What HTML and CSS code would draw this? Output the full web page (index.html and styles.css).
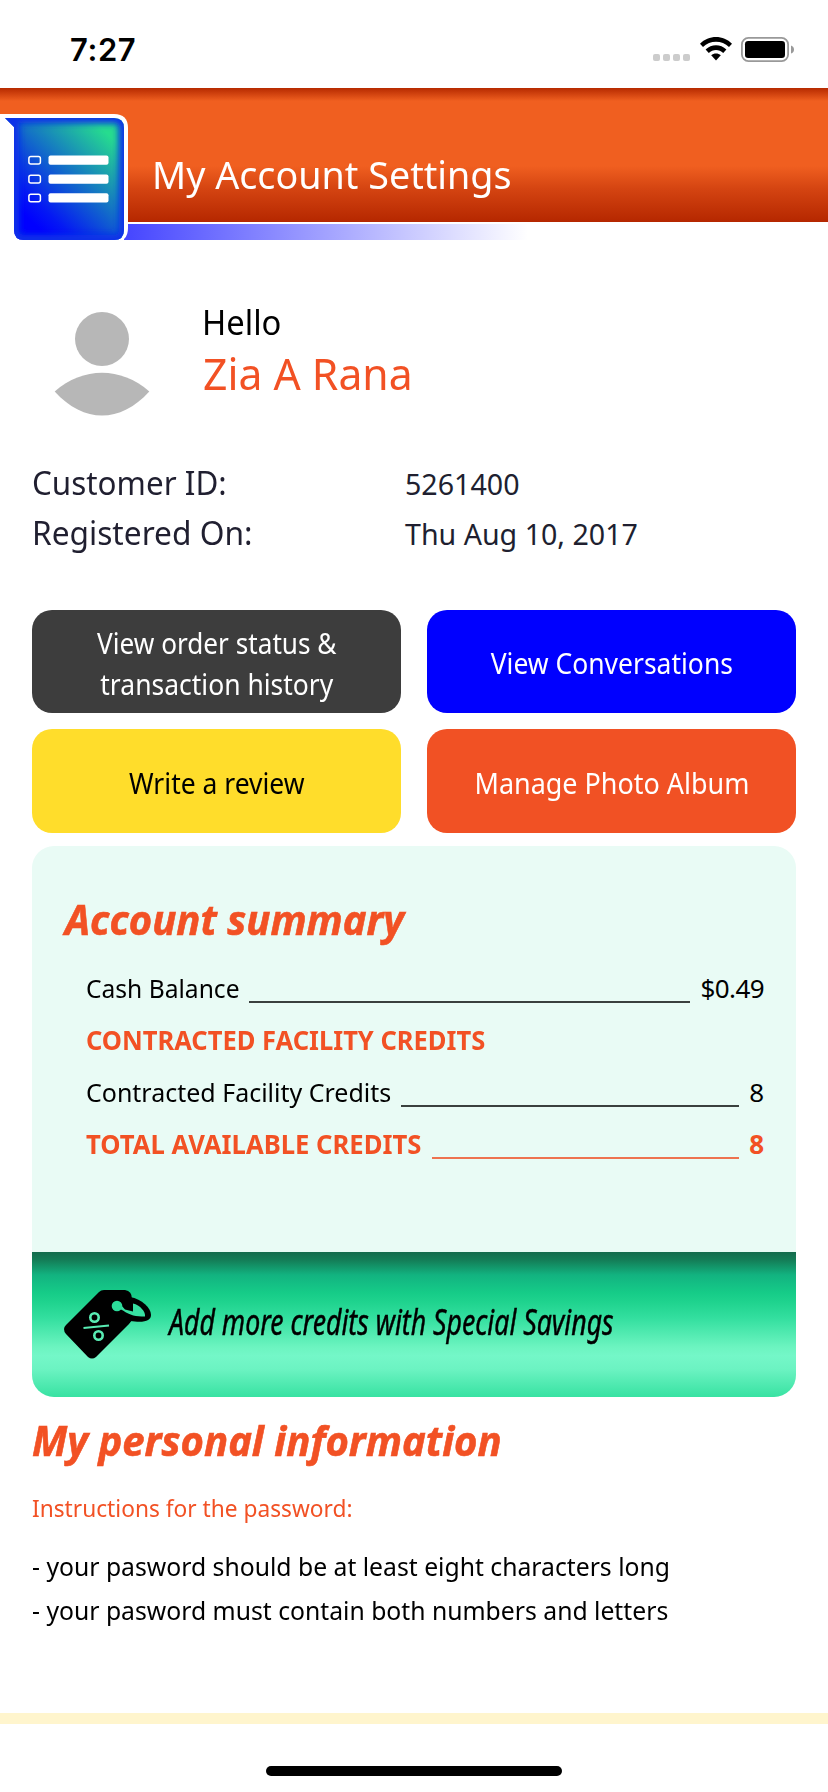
FILE: index.html
```html
<!DOCTYPE html>
<html lang="en">
<head>
<meta charset="utf-8">
<title>My Account Settings</title>
<link rel="stylesheet" href="styles.css">
</head>
<body>
<div class="screen">
  <div class="status">
    <span class="clock">7:27</span>
    <div class="status-icons">
      <span class="dots"><i></i><i></i><i></i><i></i></span>
      <svg class="wifi" viewBox="0 0 32 24" width="32" height="24">
        <path d="M0 6.800C8.500-2.200 23.500-2.200 32 6.800L29 9.900C22 2.900 10 2.900 3 9.900Z"/>
        <path d="M5.600 12.600C11.400 6.800 20.600 6.800 26.400 12.600L23.200 15.900C19.200 12 12.800 12 8.800 15.900Z"/>
        <path d="M11.200 18.300C13.900 15.800 18.100 15.800 20.800 18.300L16 23.400Z"/>
      </svg>
      <svg class="battery" viewBox="0 0 54 26" width="54" height="26">
        <rect x=".9" y=".9" width="46.200" height="23.200" rx="6.500" fill="#fff" stroke="#999" stroke-width="1.800"/>
        <rect x="4" y="4" width="40" height="17" rx="3.200"/>
        <path d="M50 8.500Q53 9.500 53 12.500T50 16.500Z" fill="#999"/>
      </svg>
    </div>
  </div>

  <header class="header">
    <div class="header-bar"><h1 class="fit title">My Account Settings</h1></div>
    <div class="header-stripe"></div>
    <svg class="tab" viewBox="0 0 128 128" width="128" height="128">
      <defs>
        <linearGradient id="tabFill" gradientUnits="userSpaceOnUse" x1="30" y1="106" x2="110" y2="22">
          <stop offset="0" stop-color="#00f"/><stop offset=".15" stop-color="#0418f4"/><stop offset="1" stop-color="#26dc8f"/>
        </linearGradient>
        <clipPath id="tabClip"><path d="M5 4H114Q124 4 124 14V116Q124 126 114 126H24Q14 126 14 116V13Z"/></clipPath>
        <filter id="soft" x="-20%" y="-20%" width="140%" height="140%"><feGaussianBlur stdDeviation="3"/></filter>
      </defs>
      <path d="M0 0H114Q128 0 128 14V114Q128 128 114 128H0Z" fill="#fff"/>
      <g clip-path="url(#tabClip)">
        <rect width="128" height="128" fill="url(#tabFill)"/>
        <path d="M5 4H114Q124 4 124 14V116Q124 126 114 126H24Q14 126 14 116V13Z" fill="none" stroke="#0a30e8" stroke-width="11" filter="url(#soft)"/>
      </g>
      <g fill="none" stroke="#fff" stroke-width="1.500">
        <rect x="28.900" y="42.400" width="11.500" height="7.600" rx="2"/>
        <rect x="28.900" y="61.300" width="11.500" height="7.600" rx="2"/>
        <rect x="28.900" y="80.200" width="11.500" height="7.600" rx="2"/>
      </g>
      <g fill="#fff">
        <rect x="48.500" y="41.500" width="60" height="9.300" rx="2"/>
        <rect x="48.500" y="60.400" width="60" height="9.300" rx="2"/>
        <rect x="48.500" y="79.300" width="60" height="9.300" rx="2"/>
      </g>
    </svg>
  </header>

  <section class="profile">
    <svg class="avatar" viewBox="0 0 96 104" width="96" height="104" fill="#b7b7b7">
      <circle cx="48" cy="27" r="27"/>
      <path d="M.7 79.500C29 54.500 67 54.500 95.300 79.500C66 111.500 30 111.500 .7 79.500Z"/>
    </svg>
    <div>
      <p class="fit hello">Hello</p>
      <p class="fit name">Zia A Rana</p>
    </div>
  </section>

  <dl class="details">
    <dt class="fit k-id">Customer ID:</dt><dd>5261400</dd>
    <dt class="fit k-reg">Registered On:</dt><dd>Thu Aug 10, 2017</dd>
  </dl>

  <nav class="actions">
    <a class="action dark"><span class="fit k-order">View order status &amp;</span><span class="fit k-history">transaction history</span></a>
    <a class="action blue"><span class="fit k-history">View Conversations</span></a>
    <a class="action yellow"><span class="fit k-history">Write a review</span></a>
    <a class="action orange"><span class="fit k-photo">Manage Photo Album</span></a>
  </nav>

  <section class="card">
    <div class="summary">
      <h2 class="fit heading">Account summary</h2>
      <div class="row"><span class="label w-cash"><span class="fit k-cash">Cash Balance</span></span><i class="rule"></i><span class="value w-money">$0.49</span></div>
      <div class="row strong"><span class="label"><span class="fit k-strong">CONTRACTED FACILITY CREDITS</span></span></div>
      <div class="row"><span class="label w-contracted"><span class="fit k-contracted">Contracted Facility Credits</span></span><i class="rule"></i><span class="value">8</span></div>
      <div class="row strong"><span class="label w-total"><span class="fit k-total">TOTAL AVAILABLE CREDITS</span></span><i class="rule"></i><span class="value">8</span></div>
    </div>
    <div class="banner">
      <svg class="tag" viewBox="0 0 88 70" width="88" height="70">
        <path d="M0 39Q0 37 2 35L35 2Q37 0 40 0H61Q68 1 68 9V29Q68 31 65 34L32 67Q28 70 24 67L2 44Q0 42 0 39Z"/>
        <path d="M66 7C78 9 87 18 87 25C87 31 80 33 66 31Z"/>
        <path d="M54 18L59 20.500C66 25.500 72 26.500 81 26.500C82 22 76 15 69 13.500V21.500L61 19.500L57 15Z" fill="#37e0a1"/>
        <circle cx="53" cy="16" r="5.300" fill="#2cdc9a"/>
        <g fill="none" stroke="#58ebb3">
          <circle cx="30.500" cy="27.500" r="4.200" stroke-width="2.600"/>
          <circle cx="34.500" cy="45.500" r="4.200" stroke-width="2.600"/>
          <path d="M19.500 38L45 35.500" stroke-width="2"/>
        </g>
      </svg>
      <span class="fit banner-text">Add more credits with Special Savings</span>
    </div>
  </section>

  <section class="personal">
    <h2 class="fit heading personal-heading">My personal information</h2>
    <p class="fit instructions">Instructions for the password:</p>
    <p class="fit hint">- your pasword should be at least eight characters long</p>
    <p class="fit hint">- your pasword must contain both numbers and letters</p>
  </section>

  <footer class="footer"><div class="home"></div></footer>
</div>
</body>
</html>
```
FILE: styles.css
```css
* { box-sizing: border-box; }
body, h1, h2, p, dl, dd { margin: 0; }
body { background: #fff; color: #000; font-family: "Noto Sans", sans-serif; }
.screen { display: flex; flex-direction: column; width: 828px; height: 1792px; overflow: hidden; }

/* Condenses the face slightly; --k is the horizontal factor. */
.fit { display: block; white-space: nowrap; transform: scaleX(var(--k)); transform-origin: left; }

.status { display: flex; justify-content: space-between; height: 88px; padding: 37px 33px 0 70px; }
.clock { font: 600 31px/26px Inter, sans-serif; letter-spacing: .6px; }
.status-icons { display: flex; align-items: flex-start; }
.dots { display: flex; gap: 3px; padding-top: 17px; margin-right: 10px; }
.dots i { width: 7px; height: 7px; border-radius: 2px; background: #ccc; }
.battery { margin-left: 9px; }

.header { position: relative; height: 152px; }
.header-bar { height: 134px; padding: 59px 0 0 152px; background: linear-gradient(#b62a00, #f05f20 13px, #f05f20 78px, #d44411 101px, #b52700); }
.title { --k: .974; color: #fff; font-size: 38.7px; font-weight: 400; line-height: 54px; }
.header-stripe { width: 404px; height: 16px; margin: 2px 0 0 124px; background: linear-gradient(90deg, #4545ff, #fff); }
.tab { position: absolute; left: 0; top: 26px; }

.profile { display: flex; height: 117px; margin-top: 59px; padding-left: 54px; }
.avatar { margin: 13px 52px 0 0; }
.hello { --k: .963; font-size: 34px; line-height: 46px; }
.name { --k: .970; margin-left: 1px; color: #f25124; font-size: 44px; line-height: 56px; }

.details { display: grid; grid-template-columns: 373px 1fr; grid-auto-rows: 50px; align-items: baseline; margin: 41px 0 0 32px; color: #201f30; line-height: 50px; }
.details dt { font-size: 33.6px; }
.details dd { font-size: 28.6px; }
.k-id { --k: .935; }
.k-reg { --k: .943; }

.actions { display: grid; grid-template-columns: 369px 369px; grid-template-rows: 103px 104px; gap: 16px 26px; margin: 53px 32px 0; }
.action { display: flex; flex-direction: column; align-items: center; justify-content: center; padding-top: 2px; border-radius: 20px; color: #fff; font-size: 28.6px; line-height: 41px; }
.action .fit { transform-origin: center; }
.dark { background: #3d3d3d; }
.blue { background: #00f; }
.yellow { background: #ffdd2b; color: #000; }
.orange { background: #f15124; }
.k-order { --k: .915; }
.k-history { --k: .926; }
.k-photo { --k: .942; }

.card { margin: 13px 32px 0; border-radius: 22px; overflow: hidden; background: #e9fbf5; }
.summary { height: 406px; padding: 48px 32px 0 54px; }
.heading { --k: .975; color: #f25124; font-size: 41px; font-style: italic; font-weight: 700; line-height: 50px; -webkit-text-stroke: .6px; }
.summary .heading { margin: 0 0 18px -21px; }
.row { display: flex; height: 52px; font-size: 26px; line-height: 52px; }
.label { flex: none; }
.rule { flex: 1; height: 2px; margin-top: 39px; background: #3a403e; }
.value { width: 25px; text-align: right; }
.w-cash { width: 163px; }
.w-money { width: 74px; letter-spacing: -.6px; }
.w-contracted { width: 315px; }
.w-total { width: 346px; }
.k-cash { --k: .946; }
.k-contracted { --k: .961; }
.k-strong { --k: .981; }
.k-total { --k: .986; }
.strong { color: #f25124; font-weight: 700; }
.strong .rule { background: #ee7350; }

.banner { display: flex; height: 145px; padding: 38px 0 0 32px; background: linear-gradient(#146b4c, #147d57 8px, #12b380 23px, #16cc88 41px, #1fd38e 50px, #33df9f 66px, #6cf4c0 95px, #74f7c8 104px, #6cf3c2 117px, #38e2a2); }
.banner-text { --k: .721; margin: 6px 0 0 17px; font-size: 37px; font-style: italic; line-height: 50px; -webkit-text-stroke: .5px; }

.personal { padding: 18px 0 0 32px; }
.personal-heading { --k: .977; }
.instructions { --k: .946; margin-top: 23px; color: #f25124; font-size: 24px; line-height: 40px; }
.hint { --k: .951; font-size: 26px; line-height: 44px; }
.instructions + .hint { margin-top: 16px; }

.footer { display: flex; justify-content: center; margin-top: 81px; padding-top: 42px; border-top: 11px solid #fff5cd; }
.home { width: 296px; height: 10px; border-radius: 5px; background: #000; }
```
